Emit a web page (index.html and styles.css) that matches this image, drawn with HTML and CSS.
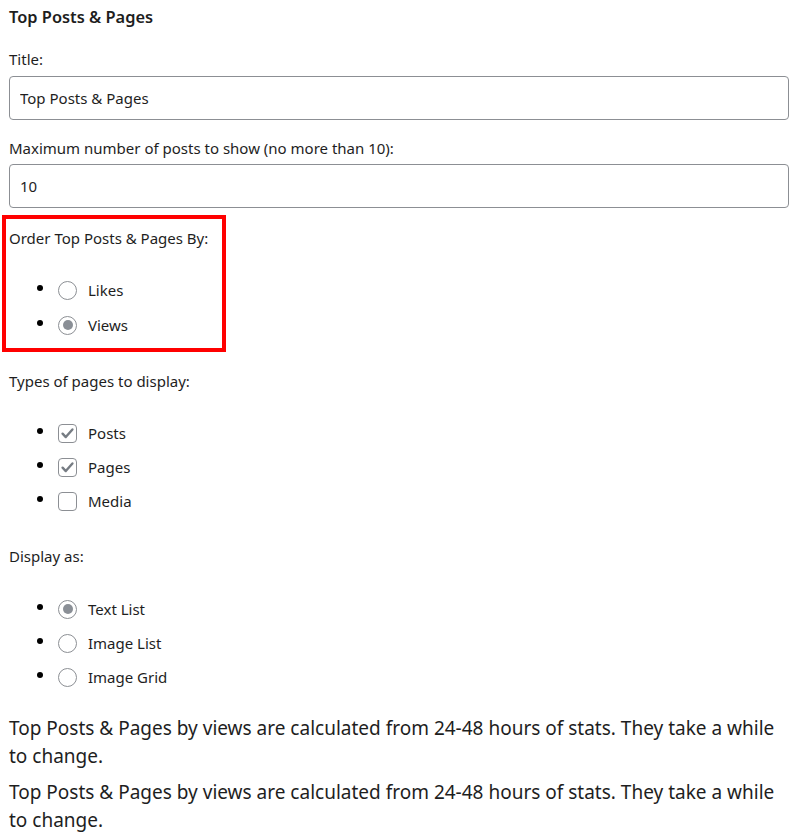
FILE: index.html
```html
<!DOCTYPE html>
<html lang="en">
<head>
<meta charset="utf-8">
<title>Top Posts &amp; Pages widget</title>
<link rel="stylesheet" href="styles.css">
</head>
<body>
<div class="widget">
  <h3 class="widget-title">Top Posts &amp; Pages</h3>

  <div class="field">
    <label class="field-label" for="tp-title">Title:</label>
    <input class="text-input" id="tp-title" type="text" value="Top Posts &amp; Pages">
  </div>

  <div class="field field-count">
    <label class="field-label" for="tp-count">Maximum number of posts to show (no more than 10):</label>
    <input class="text-input" id="tp-count" type="text" value="10">
  </div>

  <div class="order-box">
    <p class="group-label">Order Top Posts &amp; Pages By:</p>
    <ul class="choices">
      <li class="choice"><span class="radio"></span><span class="choice-text">Likes</span></li>
      <li class="choice"><span class="radio is-checked"></span><span class="choice-text">Views</span></li>
    </ul>
  </div>

  <p class="group-label group-types">Types of pages to display:</p>
  <ul class="choices">
    <li class="choice"><span class="checkbox is-checked"><svg viewBox="0 0 20 20"><path d="M4.2 10.2 8 14.2 15.8 5.2"/></svg></span><span class="choice-text">Posts</span></li>
    <li class="choice"><span class="checkbox is-checked"><svg viewBox="0 0 20 20"><path d="M4.2 10.2 8 14.2 15.8 5.2"/></svg></span><span class="choice-text">Pages</span></li>
    <li class="choice"><span class="checkbox"></span><span class="choice-text">Media</span></li>
  </ul>

  <p class="group-label group-display">Display as:</p>
  <ul class="choices">
    <li class="choice"><span class="radio is-checked"></span><span class="choice-text">Text List</span></li>
    <li class="choice"><span class="radio"></span><span class="choice-text">Image List</span></li>
    <li class="choice"><span class="radio"></span><span class="choice-text">Image Grid</span></li>
  </ul>

  <p class="note note-first">Top Posts &amp; Pages by views are calculated from 24-48 hours of stats. They take a while to change.</p>
  <p class="note">Top Posts &amp; Pages by views are calculated from 24-48 hours of stats. They take a while to change.</p>
</div>
</body>
</html>
```

FILE: styles.css
```css
* {
  box-sizing: border-box;
}

body {
  margin: 0;
  background: #ffffff;
  color: #1e1e1e;
  font-family: "Noto Sans", "Open Sans", sans-serif;
  font-size: 15px;
  line-height: 20px;
}

.widget {
  padding: 5px 4px 0 9px;
}

.widget-title {
  margin: 0;
  font-size: 16.4px;
  line-height: 24px;
  font-weight: 600;
}

.field {
  margin-top: 20px;
}

.field-count {
  margin-top: 18px;
}

.field-label {
  display: block;
  margin-bottom: 7px;
}

.field-count .field-label {
  margin-bottom: 6px;
}

.text-input {
  display: block;
  width: 780px;
  height: 44px;
  margin: 0;
  padding: 0 10px;
  border: 1px solid #8c8f94;
  border-radius: 4px;
  background: #fff;
  color: #1e1e1e;
  font: inherit;
  outline: none;
}

/* highlighted ordering group */
.order-box {
  width: 224px;
  margin: 7px 0 0 -7px;
  padding: 9px 10px 13px 3px;
  border: 4px solid #ff0000;
}

.group-label {
  margin: 0;
}

.group-types {
  margin-top: 19px;
}

.group-display {
  margin-top: 35px;
}

.choices {
  list-style: none;
  margin: 32px 0 0;
  padding: 0;
}

.group-display + .choices {
  margin-top: 33px;
}

.choice {
  display: flex;
  align-items: center;
  height: 20px;
  padding-left: 28px;
}

.choice + .choice {
  margin-top: 14px;
}

.order-box .choice + .choice {
  margin-top: 15px;
}

.choice::before {
  content: "";
  width: 6px;
  height: 6px;
  margin: -4px 15px 0 0;
  border-radius: 50%;
  background: #000;
  flex: none;
}

.radio,
.checkbox {
  position: relative;
  flex: none;
  width: 19px;
  height: 19px;
  margin-right: 11px;
  border: 1px solid #8c8f94;
  background: #fff;
}

.radio {
  border-radius: 50%;
}

.radio.is-checked::after {
  content: "";
  position: absolute;
  left: 3.5px;
  top: 3.5px;
  width: 10px;
  height: 10px;
  border-radius: 50%;
  background: #8a8f96;
}

.checkbox {
  border-radius: 4px;
}

.checkbox svg {
  display: block;
  width: 17px;
  height: 17px;
}

.checkbox path {
  fill: none;
  stroke: #767c83;
  stroke-width: 2.8;
  stroke-linecap: round;
  stroke-linejoin: round;
}

.note {
  max-width: 772px;
  margin: 8px 0 0;
  font-size: 19px;
  line-height: 28px;
}

.note-first {
  margin-top: 27px;
}
```
